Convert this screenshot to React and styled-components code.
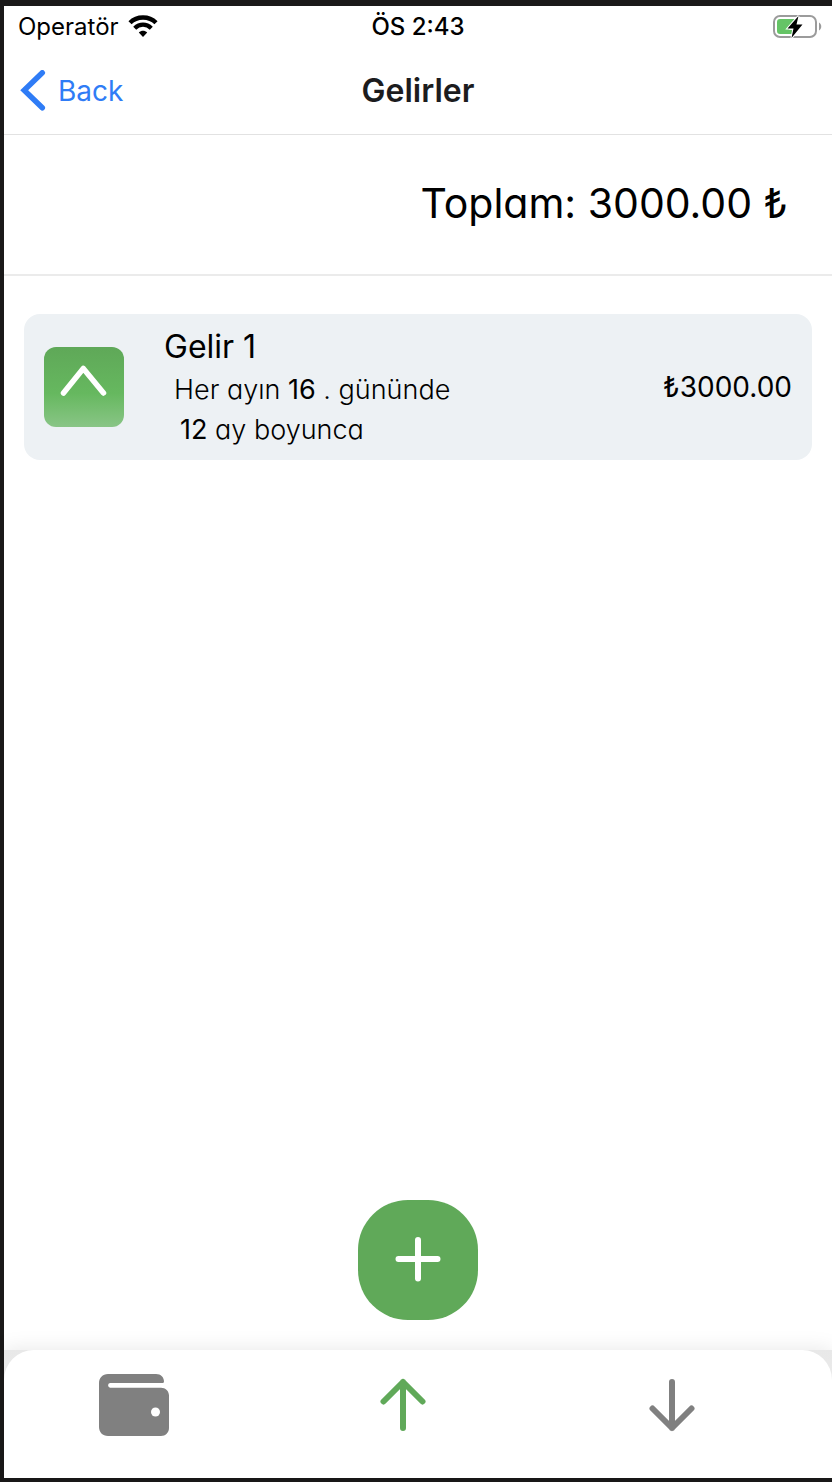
import React from "react";
import styled, { createGlobalStyle } from "styled-components";

const colors = {
  frame: "#1a1919",
  ink: "#000000",
  title: "#1c1c1e",
  link: "#2f7cf6",
  green: "#60a959",
  grey: "#808080",
  card: "#edf1f4",
  line: "#ebebeb",
};

const GlobalStyle = createGlobalStyle`
  *, *::before, *::after { box-sizing: border-box; }
  body {
    margin: 0;
    background: ${colors.frame};
    color: ${colors.ink};
    font-family: Inter, "Liberation Sans", sans-serif;
  }
  h1, h2, p { margin: 0; font-weight: 400; }
  svg { display: block; }
`;

const Frame = styled.div`
  display: flex;
  min-height: 100vh;
  padding: 6px 0 4px 4px;
  background: ${colors.frame};
`;

const Screen = styled.div`
  display: flex;
  flex: 1;
  flex-direction: column;
  min-width: 0;
  background: #ffffff;
`;

const StatusBar = styled.div`
  display: grid;
  grid-template-columns: 1fr auto 1fr;
  align-items: center;
  height: 42px;
  padding: 0 10px;
  font-size: 24px;
  line-height: 32px;
`;

const Carrier = styled.div`
  display: flex;
  align-items: center;
  gap: 8px;
  padding-left: 4px;
`;

const Clock = styled.time`
  font-weight: 500;
`;

const BatterySlot = styled.div`
  display: flex;
  justify-content: flex-end;
`;

const NavBar = styled.header`
  display: grid;
  grid-template-columns: 1fr auto 1fr;
  align-items: center;
  height: 87px;
  padding: 0 16px;
  border-bottom: 1px solid #e2e2e2;
`;

const BackLink = styled.a`
  display: flex;
  align-items: center;
  gap: 12px;
  color: ${colors.link};
  font-size: 28px;
  line-height: 40px;
  text-decoration: none;
`;

const Title = styled.h1`
  color: ${colors.title};
  font-size: 32px;
  font-weight: 600;
  line-height: 40px;
`;

const Rounded = styled.div`
  font-feature-settings: "cv11";
`;

const Total = styled(Rounded)`
  display: flex;
  align-items: center;
  justify-content: flex-end;
  height: 141px;
  padding: 0 44px 4px 20px;
  border-bottom: 2px solid ${colors.line};
  font-size: 41px;
  line-height: 60px;
`;

const Content = styled.main`
  flex: 1;
  padding: 38px 20px;
`;

const Card = styled(Rounded)`
  display: flex;
  align-items: center;
  min-height: 146px;
  padding: 10px 20px;
  border-radius: 16px;
  background: ${colors.card};
`;

const Badge = styled.div`
  flex: none;
  width: 80px;
  height: 80px;
  margin-right: 40px;
  border-radius: 12px;
  background: linear-gradient(#5fa858, #66b85f 58%, #89c586);
`;

const Details = styled.div`
  flex: 1;
  min-width: 0;
`;

const Name = styled.h2`
  font-size: 32px;
  line-height: 46px;
`;

const Note = styled.p`
  padding-left: ${(p) => p.$indent}px;
  font-size: 27px;
  font-weight: 300;
  line-height: 40px;

  b { font-weight: 400; }
`;

const Amount = styled.p`
  font-size: 28px;
  line-height: 40px;
`;

const Actions = styled.div`
  display: flex;
  justify-content: center;
  padding-bottom: 30px;
`;

const AddButton = styled.button`
  display: grid;
  place-items: center;
  width: 120px;
  height: 120px;
  padding: 0;
  border: 0;
  border-radius: 50px;
  background: ${colors.green};
  cursor: pointer;
`;

const TabShelf = styled.div`
  background: linear-gradient(#e8e8e8, #f2f2f2);
  box-shadow: 0 0 20px rgba(0, 0, 0, 0.1);
`;

const TabBar = styled.nav`
  display: grid;
  grid-template-columns: repeat(3, 1fr);
  height: 128px;
  padding: 20px 22px 0 0;
  border-radius: 30px 30px 0 0;
  background: #ffffff;
`;

const Tab = styled.button`
  display: flex;
  align-items: center;
  justify-content: center;
  height: 70px;
  padding: 0 8px 0 0;
  border: 0;
  background: none;
  color: ${(p) => (p.$active ? colors.green : colors.grey)};
  cursor: pointer;
`;

const WifiIcon = () => (
  <svg width="32" height="24" viewBox="0 0 32 24" aria-hidden="true">
    <path d="M3 7.800C10 0.800 22 0.800 29 7.800" fill="none" stroke="#000" strokeWidth="4.400" />
    <path d="M7.700 13.200C12.500 8.400 19.500 8.400 24.300 13.200" fill="none" stroke="#000" strokeWidth="4.200" />
    <path d="M11.800 17.500C14.300 15.300 17.700 15.300 20.200 17.500L16 22Z" fill="#000" />
  </svg>
);

const BatteryIcon = () => (
  <svg width="50" height="26" viewBox="0 0 50 26" aria-hidden="true">
    <rect x="2" y="2" width="42" height="21" rx="6" fill="#fff" stroke="#9b9b9b" strokeWidth="2" />
    <path d="M8 5H24L17 16H23L21 20H8Q5 20 5 17V8Q5 5 8 5Z" fill="#65c466" />
    <path d="M26.500 2L15.500 14.500H21.500L19.500 24L30.500 10.500H24.500Z" fill="#000" stroke="#fff" strokeWidth="2" paintOrder="stroke" />
    <path d="M47 8.500C50 10 50 15 47 16.500Z" fill="#9b9b9b" />
  </svg>
);

const BackIcon = () => (
  <svg width="26" height="42" viewBox="0 0 26 42" fill="none" stroke="currentColor" strokeWidth="5.500" strokeLinecap="round" aria-hidden="true">
    <path d="M22.300 2.800L4.200 20.300L22.300 37.800" />
  </svg>
);

const ChevronUp = () => (
  <svg width="80" height="80" viewBox="0 0 80 80" fill="none" stroke="#fff" strokeWidth="5.500" strokeLinecap="round" strokeLinejoin="round" aria-hidden="true">
    <path d="M19.500 46L39.300 21.500L59.500 46" />
  </svg>
);

const PlusIcon = () => (
  <svg width="46" height="46" viewBox="0 0 46 46" stroke="#fff" strokeWidth="6" strokeLinecap="round" aria-hidden="true">
    <path d="M23 3V41.500M3.500 22H42.500" />
  </svg>
);

const WalletIcon = () => (
  <svg width="72" height="62" viewBox="0 0 72 62" aria-hidden="true">
    <path
      fill="currentColor"
      d="M10 0H58C63 0 66 3.500 66 7.500Q66 9 64.500 9H12A2.400 2.400 0 0 0 12 13.700H63C67.500 13.700 71 17 71 21.500V54C71 58.500 67.500 62 63 62H10C4.500 62 1 58 1 53V9C1 4 4.500 0 10 0Z"
    />
    <circle cx="57.500" cy="38" r="4.500" fill="#fff" />
  </svg>
);

const ArrowIcon = ({ down }) => (
  <svg width="46" height="54" viewBox="0 0 46 54" fill="none" stroke="currentColor" strokeWidth="6" strokeLinecap="round" strokeLinejoin="round" aria-hidden="true">
    <path d={down ? "M23 4V50M3.500 30.500L23 50L42.500 30.500" : "M23 50V4M3.500 23.500L23 4L42.500 23.500"} />
  </svg>
);

export default function App() {
  return (
    <>
      <GlobalStyle />
      <Frame>
        <Screen>
          <StatusBar>
            <Carrier>
              <span>Operatör</span>
              <WifiIcon />
            </Carrier>
            <Clock>ÖS 2:43</Clock>
            <BatterySlot>
              <BatteryIcon />
            </BatterySlot>
          </StatusBar>
          <NavBar>
            <BackLink href="#back">
              <BackIcon />
              Back
            </BackLink>
            <Title>Gelirler</Title>
          </NavBar>
          <Total as="p">Toplam: 3000.00 ₺</Total>
          <Content>
            <Card as="article">
              <Badge>
                <ChevronUp />
              </Badge>
              <Details>
                <Name>Gelir 1</Name>
                <Note $indent={10}>
                  Her ayın <b>16</b> . gününde
                </Note>
                <Note $indent={16}>
                  <b>12</b> ay boyunca
                </Note>
              </Details>
              <Amount>₺3000.00</Amount>
            </Card>
          </Content>
          <Actions>
            <AddButton type="button" aria-label="Gelir ekle">
              <PlusIcon />
            </AddButton>
          </Actions>
          <TabShelf>
            <TabBar>
              <Tab type="button" aria-label="Cüzdan">
                <WalletIcon />
              </Tab>
              <Tab type="button" aria-label="Gelirler" aria-current="page" $active>
                <ArrowIcon />
              </Tab>
              <Tab type="button" aria-label="Giderler">
                <ArrowIcon down />
              </Tab>
            </TabBar>
          </TabShelf>
        </Screen>
      </Frame>
    </>
  );
}
